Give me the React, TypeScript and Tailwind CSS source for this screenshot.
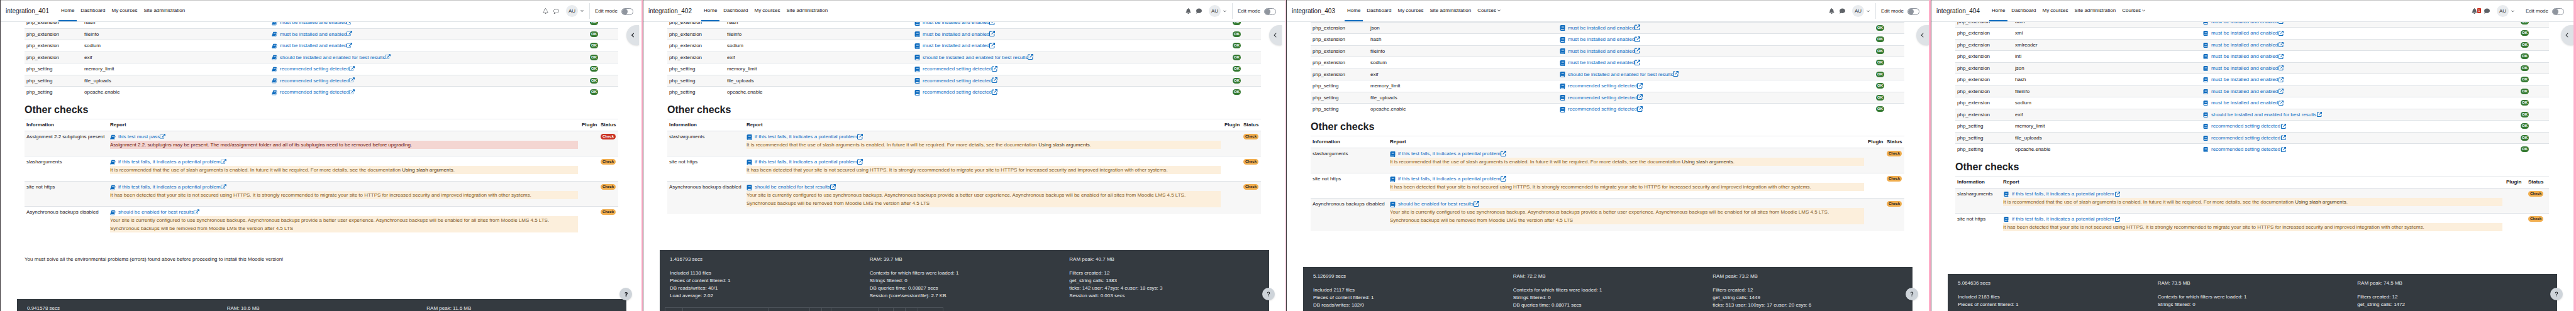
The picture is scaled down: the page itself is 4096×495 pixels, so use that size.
import React from 'react';
import { FaChevronDown as FaChevronDownBold, FaChevronLeft as FaChevronLeftBold, FaQuestion as FaQuestionBold } from 'react-icons/fa';
import {
  FaArrowUpRightFromSquare,
  FaBell,
  FaBook,
  FaChevronDown,
  FaChevronLeft,
  FaComment,
  FaQuestion,
} from 'react-icons/fa6';

type Tone = 'danger' | 'warning';

interface EnvRow {
  name: string;
  info: string;
  report: string;
}

interface Check {
  info: string;
  report: string;
  tone: Tone;
  message: React.ReactNode;
}

interface Site {
  name: string;
  iconSet: 'fa4' | 'fa6' | 'fa6-fixed';
  courses?: boolean;
  notifications?: number;
  divider?: boolean;
  // Tailwind classes that differ between the four sites
  edge: string;
  inset: string;
  drawer: string;
  help: string;
  scroll: string;
  infoCol: string;
  nameCol: string;
  pluginCol: string;
  statusCol: string;
  rows: EnvRow[];
  checks: Check[];
  notice?: string;
  perf: string[][];
  cacheTable?: boolean;
}

const MUST = 'must be installed and enabled';
const RECOMMENDED = 'recommended setting detected';

const extension = (info: string): EnvRow => ({ name: 'php_extension', info, report: MUST });

const commonRows: EnvRow[] = [
  extension('hash'),
  extension('fileinfo'),
  extension('sodium'),
  { name: 'php_extension', info: 'exif', report: 'should be installed and enabled for best results' },
  { name: 'php_setting', info: 'memory_limit', report: RECOMMENDED },
  { name: 'php_setting', info: 'file_uploads', report: RECOMMENDED },
  { name: 'php_setting', info: 'opcache.enable', report: RECOMMENDED },
];

const assignmentCheck: Check = {
  info: 'Assignment 2.2 subplugins present',
  report: 'this test must pass',
  tone: 'danger',
  message: 'Assignment 2.2. subplugins may be present. The mod/assignment folder and all of its subplugins need to be removed before upgrading.',
};

const slashCheck: Check = {
  info: 'slasharguments',
  report: 'if this test fails, it indicates a potential problem',
  tone: 'warning',
  message: (
    <>
      It is recommended that the use of slash arguments is enabled. In future it will be required. For more details, see the documentation{' '}
      <a href="#slash" className="text-[#4a3414]">Using slash arguments</a>.
    </>
  ),
};

const httpsCheck: Check = {
  info: 'site not https',
  report: 'if this test fails, it indicates a potential problem',
  tone: 'warning',
  message:
    'It has been detected that your site is not secured using HTTPS. It is strongly recommended to migrate your site to HTTPS for increased security and improved integration with other systems.',
};

const backupsCheck: Check = {
  info: 'Asynchronous backups disabled',
  report: 'should be enabled for best results',
  tone: 'warning',
  message: (
    <>
      Your site is currently configured to use synchronous backups. Asynchronous backups provide a better user experience. Asynchronous backups will be enabled for all sites from Moodle LMS 4.5 LTS.
      <br />
      Synchronous backups will be removed from Moodle LMS the version after 4.5 LTS
    </>
  ),
};

const sites: Site[] = [
  {
    name: 'integration_401',
    iconSet: 'fa4',
    divider: true,
    edge: 'border-r-2',
    inset: 'pr-0',
    drawer: 'right-1',
    help: 'right-[15px]',
    scroll: '-mt-[9px]',
    infoCol: 'w-[133px]',
    nameCol: 'w-[298px]',
    pluginCol: 'w-[30px]',
    statusCol: 'w-[31px]',
    rows: commonRows,
    checks: [assignmentCheck, slashCheck, httpsCheck, backupsCheck],
    notice: 'You must solve all the environmental problems (errors) found above before proceeding to install this Moodle version!',
    perf: [['0.941578 secs'], ['RAM: 10.6 MB'], ['RAM peak: 11.6 MB']],
  },
  {
    name: 'integration_402',
    iconSet: 'fa6',
    divider: true,
    edge: 'border-r',
    inset: 'pr-0.5',
    drawer: 'right-1.5',
    help: 'right-[17px]',
    scroll: '-mt-[9px]',
    infoCol: 'w-[123px]',
    nameCol: 'w-[298px]',
    pluginCol: 'w-[30px]',
    statusCol: 'w-[31px]',
    rows: commonRows,
    checks: [slashCheck, httpsCheck, backupsCheck],
    perf: [
      ['1.416793 secs', 'Included 1138 files', 'Pieces of content filtered: 1', 'DB reads/writes: 40/1', 'Load average: 2.02'],
      ['RAM: 39.7 MB', 'Contexts for which filters were loaded: 1', 'Strings filtered: 0', 'DB queries time: 0.08827 secs', 'Session (core\\session\\file): 2.7 KB'],
      ['RAM peak: 40.7 MB', 'Filters created: 12', 'get_string calls: 1383', 'ticks: 142 user: 47sys: 4 cuser: 18 csys: 3', 'Session wait: 0.003 secs'],
    ],
    cacheTable: true,
  },
  {
    name: 'integration_403',
    iconSet: 'fa6',
    courses: true,
    divider: true,
    edge: 'border-r-3',
    inset: 'pr-0.5',
    drawer: 'right-0',
    help: 'right-[17px]',
    scroll: 'mt-0',
    infoCol: 'w-[123px]',
    nameCol: 'w-[301px]',
    pluginCol: 'w-[30px]',
    statusCol: 'w-[31px]',
    rows: [extension('json'), ...commonRows],
    checks: [slashCheck, httpsCheck, backupsCheck],
    perf: [
      ['5.126999 secs', 'Included 2117 files', 'Pieces of content filtered: 1', 'DB reads/writes: 182/0'],
      ['RAM: 72.2 MB', 'Contexts for which filters were loaded: 1', 'Strings filtered: 0', 'DB queries time: 0.88071 secs'],
      ['RAM peak: 73.2 MB', 'Filters created: 12', 'get_string calls: 1449', 'ticks: 513 user: 100sys: 17 cuser: 20 csys: 6'],
    ],
  },
  {
    name: 'integration_404',
    iconSet: 'fa6-fixed',
    courses: true,
    notifications: 1,
    edge: 'border-r-4',
    inset: 'pr-0.5',
    drawer: 'right-0',
    help: 'right-[17px]',
    scroll: '-mt-[10px]',
    infoCol: 'w-[73px]',
    nameCol: 'w-[298px]',
    pluginCol: 'w-[35px]',
    statusCol: 'w-[36px]',
    rows: [extension('dom'), extension('xml'), extension('xmlreader'), extension('intl'), extension('json'), ...commonRows],
    checks: [slashCheck, httpsCheck],
    perf: [
      ['5.064636 secs', 'Included 2183 files', 'Pieces of content filtered: 1'],
      ['RAM: 73.5 MB', 'Contexts for which filters were loaded: 1', 'Strings filtered: 0'],
      ['RAM peak: 74.5 MB', 'Filters created: 12', 'get_string calls: 1472'],
    ],
  },
];

// Font Awesome 4 glyphs, not shipped by react-icons
const fa4 = {
  book: 'M1703 478q40 57 18 129l-275 906q-19 64-76.5 107.5t-122.5 43.5h-923q-77 0-148.5-53.5t-99.5-131.5q-24-67-2-127 0-4 3-27t4-37q1-8-3-21.5t-3-19.5q2-11 8-21t16.5-23.5 16.5-23.5q23-38 45-91.5t30-91.5q3-10 .5-30t-.5-28q3-11 17-28t17-23q21-36 42-92t25-90q1-9-2.5-32t.5-28q4-13 22-30.5t22-22.5q19-26 42.5-84.5t27.5-96.5q1-8-3-25.5t-2-26.5q2-8 9-18t18-23 17-21q8-12 16.5-30.5t15-35 16-36 19.5-32 26.5-23.5 36-11.5 47.5 5.5l-1 3q38-9 51-9h761q74 0 114 56t18 130l-274 906q-36 119-71.5 153.5t-128.5 34.5h-869q-27 0-38 15-11 16-1 43 24 70 144 70h923q29 0 56-15.5t35-41.5l300-987q7-22 5-57 38 15 59 43zm-1064 2q-4 13 2 22.5t20 9.5h608q13 0 25.5-9.5t16.5-22.5l21-64q4-13-2-22.5t-20-9.5h-608q-13 0-25.5 9.5t-16.5 22.5zm-83 256q-4 13 2 22.5t20 9.5h608q13 0 25.5-9.5t16.5-22.5l21-64q4-13-2-22.5t-20-9.5h-608q-13 0-25.5 9.5t-16.5 22.5z',
  external:
    'M1408 928v320q0 119-84.5 203.5t-203.5 84.5h-832q-119 0-203.5-84.5t-84.5-203.5v-832q0-119 84.5-203.5t203.5-84.5h704q14 0 23 9t9 23v64q0 14-9 23t-23 9h-704q-66 0-113 47t-47 113v832q0 66 47 113t113 47h832q66 0 113-47t47-113v-320q0-14 9-23t23-9h64q14 0 23 9t9 23zm384-864v512q0 26-19 45t-45 19-45-19l-176-176-652 652q-10 10-23 10t-23-10l-114-114q-10-10-10-23t10-23l652-652-176-176q-19-19-19-45t19-45 45-19h512q26 0 45 19t19 45z',
  bell: 'M912 1696q0-16-16-16-59 0-101.5-42.5t-42.5-101.5q0-16-16-16t-16 16q0 73 51.5 124.5t124.5 51.5q16 0 16-16zm-666-288h1300q-266-300-266-832 0-51-24-105t-69-103-121.5-80.5-169.5-31.5-169.5 31.5-121.5 80.5-69 103-24 105q0 532-266 832zm1482 0q0 52-38 90t-90 38h-448q0 106-75 181t-181 75-181-75-75-181h-448q-52 0-90-38t-38-90q50-42 91-88t85-119.5 74.5-158.5 50-206 19.5-260q0-152 117-282.5t307-158.5q-8-19-8-39 0-40 28-68t68-28 68 28 28 68q0 20-8 39 190 28 307 158.5t117 282.5q0 139 19.5 260t50 206 74.5 158.5 85 119.5 91 88z',
  comment:
    'M896 384q-204 0-381.5 69.5t-282 187.5-104.5 255q0 112 71.5 213.5t201.5 175.5l87 50-27 96q-24 91-70 172 152-63 275-171l43-38 57 6q69 8 130 8 204 0 381.5-69.5t282-187.5 104.5-255-104.5-255-282-187.5-381.5-69.5zm896 512q0 174-120 321.5t-326 233-450 85.5q-70 0-145-8-198 175-460 242-49 14-114 22h-5q-15 0-27-10.5t-16-27.5v-1q-3-4-.5-12t2-10 4.5-9.5l6-9 7-8.5 8-9q7-8 31-34.5t34.5-38 31-39.5 32.5-51 27-59 26-76q-157-89-247.5-220t-90.5-281q0-130 71-248.5t191-204.5 286-136.5 348-50.5 348 50.5 286 136.5 191 204.5 71 248.5z',
};

const Fa4Icon: React.FC<{ path: string; className: string; box?: string }> = ({ path, className, box = '0 0 1792 1792' }) => (
  <svg viewBox={box} fill="currentColor" aria-hidden="true" className={className}>
    <path d={path} />
  </svg>
);

const ReportLink: React.FC<{ iconSet: Site['iconSet']; children: React.ReactNode }> = ({ iconSet, children }) => (
  <a href="#docs" className="flex h-3 items-center text-[#0f6cbf]">
    {iconSet === 'fa4' && <Fa4Icon path={fa4.book} className="mr-1 size-[9px] shrink-0" />}
    {iconSet === 'fa6' && <FaBook className="mr-1 size-[9px] shrink-0" />}
    {iconSet === 'fa6-fixed' && <FaBook className="mr-[5px] ml-px size-2 shrink-0" />}
    <span>{children}</span>
    {iconSet === 'fa4' && <Fa4Icon path={fa4.external} box="0 0 1792 1664" className="mb-0.5 size-[9px] shrink-0" />}
    {iconSet === 'fa6' && <FaArrowUpRightFromSquare className="mb-0.5 size-[9px] shrink-0" />}
    {iconSet === 'fa6-fixed' && <FaArrowUpRightFromSquare className="mb-px ml-px size-2 shrink-0" />}
  </a>
);

const navLink = 'flex h-full items-center border-b-2 px-1';

const SiteHeader: React.FC<{ site: Site }> = ({ site }) => (
  <header className={`shrink-0 border-t border-b border-t-[#c6c6c6] border-b-[#dee2e6] bg-white ${site.inset}`}>
    <div className="flex h-[33px] items-center pr-[13px] pl-2">
      <a href="#home" className="w-[84px] text-[10px]">{site.name}</a>
      <nav className="flex h-full flex-1 gap-0.5">
        <a href="#home" className={`${navLink} border-[#0f6cbf]`}>Home</a>
        <a href="#dashboard" className={`${navLink} border-transparent`}>Dashboard</a>
        <a href="#courses" className={`${navLink} border-transparent`}>My courses</a>
        <a href="#admin" className={`${navLink} border-transparent`}>Site administration</a>
        {site.courses && (
          <button type="button" className={`${navLink} gap-0.5 border-transparent`}>
            Courses <FaChevronDown className="size-[5px]" />
          </button>
        )}
      </nav>
      <div className="flex h-full items-center text-[#5f6368]">
        <button type="button" aria-label="Notifications" className="relative flex w-4 justify-center">
          {site.iconSet === 'fa4' ? <Fa4Icon path={fa4.bell} className="size-[9px]" /> : <FaBell className={site.notifications ? 'mr-1.5 size-[9px]' : 'size-[9px]'} />}
          {site.notifications && (
            <span className="absolute top-0 right-0 flex h-2 w-1.5 items-center justify-center rounded-[1px] bg-[#ca3120] text-[6px] text-white">
              {site.notifications}
            </span>
          )}
        </button>
        <button type="button" aria-label="Messages" className="ml-px flex w-4 justify-center">
          {site.iconSet === 'fa4' ? <Fa4Icon path={fa4.comment} className="size-[9px]" /> : <FaComment className="size-[9px]" />}
        </button>
        <button type="button" className="ml-2 flex items-center gap-1 text-[#343a40]">
          <span className="flex size-[19px] items-center justify-center rounded-full bg-[#e9ecef]">AU</span>
          {site.iconSet === 'fa4' ? <FaChevronDownBold className="size-[5px]" /> : <FaChevronDown className="size-[5px]" />}
        </button>
        <span className={site.divider ? 'ml-[9px] h-[25px] border-l border-[#dee2e6]' : 'ml-[9px] h-[25px] border-l border-transparent'} />
        <label htmlFor={`edit-${site.name}`} className="ml-2 w-[42px] text-[#1d2125]">Edit mode</label>
        <input
          id={`edit-${site.name}`}
          type="checkbox"
          className="mt-0.5 h-[11px] w-[19px] appearance-none rounded-full border border-[#8f959e] bg-white before:block before:size-[9px] before:rounded-full before:bg-[#8f959e]"
        />
      </div>
    </div>
  </header>
);

const badgeTones = {
  ok: 'px-0.5 bg-[#357a32] text-white',
  danger: 'px-[3px] bg-[#ca3120] text-white',
  warning: 'px-[3px] bg-[#f0ad4e] text-[#1d2125]',
};

const Badge: React.FC<{ tone: keyof typeof badgeTones; children: React.ReactNode }> = ({ tone, children }) => (
  <span className={`inline-block h-[9px] rounded-full align-middle text-[6px] leading-[9px] font-bold ${badgeTones[tone]}`}>{children}</span>
);

const EnvTable: React.FC<{ site: Site }> = ({ site }) => (
  <table className="w-full table-fixed border-separate border-spacing-0">
    <colgroup>
      <col className="w-[92px]" />
      <col className={site.nameCol} />
      <col />
      <col className="w-12" />
    </colgroup>
    <tbody>
      {site.rows.map((row, i) => {
        // stripes are counted from the bottom, the top rows are scrolled away
        const striped = (site.rows.length - i) % 2 === 0;
        const cell = 'border-t border-[#dee2e6] px-[3px] py-0 align-middle';
        return (
          <tr key={row.info} className={striped ? 'h-[18px] bg-[#f7f7f7]' : 'h-[19px]'}>
            <td className={cell}>{row.name}</td>
            <td className={cell}>{row.info}</td>
            <td className={cell}><ReportLink iconSet={site.iconSet}>{row.report}</ReportLink></td>
            <td className={cell}><Badge tone="ok">OK</Badge></td>
          </tr>
        );
      })}
    </tbody>
  </table>
);

const alertTones = {
  danger: 'bg-[#f4d6d2] text-[#691911]',
  warning: 'bg-[#fcefdc] text-[#7d5a29]',
};

const ChecksTable: React.FC<{ site: Site }> = ({ site }) => (
  <table className="w-full table-fixed border-separate border-spacing-0">
    <colgroup>
      <col className={site.infoCol} />
      <col />
      <col className={site.pluginCol} />
      <col className={site.statusCol} />
    </colgroup>
    <thead>
      <tr className="h-[19px] text-left">
        {['Information', 'Report', 'Plugin', 'Status'].map((title) => (
          <th key={title} className="border-t border-[#e6e9ec] px-[3px] py-0 align-middle font-bold">{title}</th>
        ))}
      </tr>
    </thead>
    <tbody>
      {site.checks.map((check, i) => {
        const cell = i === 0 ? 'border-t border-[#d8dce3] px-[3px] pt-[3px] align-top' : 'border-t border-[#dee2e6] px-[3px] pt-[3px] align-top';
        return (
          <tr key={check.info} className={i % 2 === 0 ? 'bg-[#f7f7f7]' : ''}>
            <td className={cell}>{check.info}</td>
            <td className={`${cell} pb-[11px]`}>
              <ReportLink iconSet={site.iconSet}>{check.report}</ReportLink>
              <p className={`leading-[13px] ${alertTones[check.tone]}`}>{check.message}</p>
            </td>
            <td className={cell} />
            <td className={cell}><Badge tone={check.tone}>Check</Badge></td>
          </tr>
        );
      })}
    </tbody>
  </table>
);

const cacheColumns = [
  { title: 'Mode', className: 'w-7 text-left' },
  { title: 'Cache item', className: 'w-[136px] text-left' },
  { title: 'Static', className: 'w-[66px] text-left' },
  { title: 'H', className: 'w-[19px] text-right' },
  { title: 'M', className: 'w-[15px] text-right' },
  { title: 'Primary', className: 'w-[75px] text-left' },
  { title: 'H', className: 'w-6 text-right' },
  { title: 'M', className: 'w-[19px] text-right' },
  { title: 'S', className: 'w-5 text-right' },
  { title: 'I/O', className: 'w-10 text-right' },
];

const PerfFooter: React.FC<{ site: Site }> = ({ site }) => (
  <footer className="mr-6 ml-[26px] min-h-24 bg-[#343a40] pt-[9px] text-[#eceef0]">
    <div className="grid grid-cols-3 pl-4">
      {site.perf.map(([first, ...rest]) => (
        <div key={first}>
          <p className="mb-2.5">{first}</p>
          {rest.map((line) => (
            <p key={line}>{line}</p>
          ))}
        </div>
      ))}
    </div>
    {site.cacheTable && (
      <table className="mt-3 ml-2 w-[442px] table-fixed border-collapse">
        <thead>
          <tr>
            {cacheColumns.map((column, i) => (
              <th key={i} className={`border border-[#4b5158] px-[3px] py-1 font-bold ${column.className}`}>{column.title}</th>
            ))}
          </tr>
        </thead>
      </table>
    )}
  </footer>
);

const SitePanel: React.FC<{ site: Site }> = ({ site }) => (
  <section className={`relative flex min-h-0 min-w-0 flex-col overflow-hidden border-l border-l-[#3f3a3d] border-r-[#ffaec9] ${site.edge}`}>
    <SiteHeader site={site} />
    <main className={`min-h-0 flex-1 overflow-hidden ${site.inset}`}>
      <div className={`pr-[37px] pl-[38px] ${site.scroll}`}>
        <EnvTable site={site} />
        <h2 className="mt-[9px] mb-1 text-base leading-5 font-bold">Other checks</h2>
        <ChecksTable site={site} />
        {site.notice && <p className="mt-[26px]">{site.notice}</p>}
      </div>
      <div className="pt-[57px]">
        <PerfFooter site={site} />
      </div>
    </main>

    <button type="button" aria-label="Open block drawer" className={`absolute top-10 flex h-8 w-5 items-center justify-center rounded-l-full bg-[#dee2e6] shadow-sm ${site.drawer}`}>
      {site.iconSet === 'fa4' ? <FaChevronLeftBold className="size-2" /> : <FaChevronLeft className="size-2" />}
    </button>
    <button type="button" aria-label="Help" className={`absolute bottom-[17px] flex size-5 items-center justify-center rounded-full bg-[#ced4da] shadow-sm ${site.help}`}>
      {site.iconSet === 'fa4' ? <FaQuestionBold className="size-[7px]" /> : <FaQuestion className="size-2" />}
    </button>
  </section>
);

export default function App() {
  return (
    <div className="grid h-screen grid-cols-[1022fr_1023fr_1025fr_1026fr] overflow-hidden bg-white font-['Liberation_Sans',Arial,sans-serif] text-[8px] leading-3 whitespace-nowrap text-[#1d2125]">
      {sites.map((site) => (
        <SitePanel key={site.name} site={site} />
      ))}
    </div>
  );
}
